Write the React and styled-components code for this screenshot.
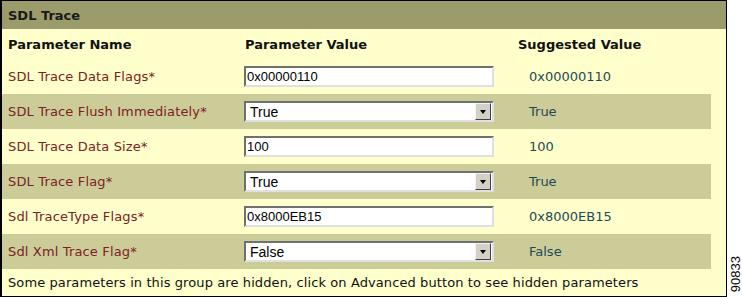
import React from "react";
import styled, { createGlobalStyle } from "styled-components";

const GlobalStyle = createGlobalStyle`
  html, body {
    margin: 0;
    padding: 0;
    background: #ffffff;
  }
`;

const params = [
  { name: "SDL Trace Data Flags*", type: "text", value: "0x00000110", suggested: "0x00000110" },
  { name: "SDL Trace Flush Immediately*", type: "select", value: "True", suggested: "True" },
  { name: "SDL Trace Data Size*", type: "text", value: "100", suggested: "100" },
  { name: "SDL Trace Flag*", type: "select", value: "True", suggested: "True" },
  { name: "Sdl TraceType Flags*", type: "text", value: "0x8000EB15", suggested: "0x8000EB15" },
  { name: "Sdl Xml Trace Flag*", type: "select", value: "False", suggested: "False" },
];

const App = () => (
  <>
    <GlobalStyle />
    <Page>
      <Panel>
        <Title>SDL Trace</Title>
        <Table>
          <HeadRow>
            <HeadCell>Parameter Name</HeadCell>
            <HeadCell>Parameter Value</HeadCell>
            <HeadCell>Suggested Value</HeadCell>
          </HeadRow>
          {params.map((p, i) => (
            <Row key={p.name} shaded={i % 2 === 1}>
              <NameCell>{p.name}</NameCell>
              <ValueCell>
                {p.type === "text" ? (
                  <TextBox>{p.value}</TextBox>
                ) : (
                  <SelectBox>
                    <span>{p.value}</span>
                    <DropButton />
                  </SelectBox>
                )}
              </ValueCell>
              <SuggestedCell>{p.suggested}</SuggestedCell>
            </Row>
          ))}
        </Table>
        <Note>
          Some parameters in this group are hidden, click on Advanced button to see hidden parameters
        </Note>
      </Panel>
      <Side>
        <FigureId>90833</FigureId>
      </Side>
    </Page>
  </>
);

export default App;

const Page = styled.div`
  display: flex;
  width: 742px;
  height: 297px;
  font-family: "DejaVu Sans", Verdana, sans-serif;
`;

const Panel = styled.div`
  width: 724px;
  height: 295px;
  border: 1px solid #000;
  border-left-width: 2px;
  background: #ffffcc;
  display: flex;
  flex-direction: column;
`;

const Title = styled.div`
  height: 28px;
  display: flex;
  align-items: center;
  padding-left: 6px;
  background: #9c9b6b;
  font-weight: bold;
  font-size: 13px;
  color: #1a1a1a;
`;

const Table = styled.div`
  display: flex;
  flex-direction: column;
  margin-right: 15px;
`;

const gridCols = `
  display: grid;
  grid-template-columns: 242px 268px 1fr;
  align-items: center;
`;

const HeadRow = styled.div`
  ${gridCols}
  height: 30px;
`;

const HeadCell = styled.div`
  padding-left: 6px;
  font-size: 13px;
  font-weight: bold;
  color: #111;
  &:nth-child(2) {
    padding-left: 1px;
  }
`;

const Row = styled.div`
  ${gridCols}
  height: 35px;
  background: ${({ shaded }) => (shaded ? "#cccc99" : "transparent")};
`;

const NameCell = styled.div`
  padding-left: 6px;
  font-size: 13px;
  letter-spacing: 0.15px;
  color: #7b2222;
`;

const ValueCell = styled.div`
  display: flex;
`;

const SuggestedCell = styled.div`
  padding-left: 17px;
  font-size: 13px;
  color: #1d4a55;
`;

const fieldBase = `
  box-sizing: border-box;
  width: 250px;
  height: 21px;
  background: #fff;
  border: 2px solid;
  border-color: #707070 #e0e0e0 #e0e0e0 #707070;
  font-family: "Liberation Sans", Arial, sans-serif;
  font-size: 13px;
  color: #000;
  display: flex;
  align-items: center;
`;

const TextBox = styled.div`
  ${fieldBase}
  padding-left: 1px;
`;

const SelectBox = styled.div`
  ${fieldBase}
  justify-content: space-between;
  padding-left: 4px;
  padding-right: 1px;
  & > span {
    font-size: 14px;
  }
`;

const DropButton = styled.div`
  box-sizing: border-box;
  width: 16px;
  height: 17px;
  background: #d4d0c8;
  border: 1px solid;
  border-color: #f4f4f4 #404040 #404040 #f4f4f4;
  display: flex;
  align-items: center;
  justify-content: center;
  &::after {
    content: "";
    border-left: 3.5px solid transparent;
    border-right: 3.5px solid transparent;
    border-top: 4px solid #000;
  }
`;

const Note = styled.div`
  flex: 1;
  display: flex;
  align-items: center;
  padding-left: 6px;
  font-size: 13px;
  letter-spacing: 0.1px;
  color: #111;
`;

const Side = styled.div`
  flex: 1;
  position: relative;
`;

const FigureId = styled.div`
  position: absolute;
  left: 3px;
  bottom: 5px;
  writing-mode: vertical-rl;
  transform: rotate(180deg);
  font-family: "Liberation Sans", Arial, sans-serif;
  font-size: 13px;
  line-height: 11px;
  color: #000;
`;
